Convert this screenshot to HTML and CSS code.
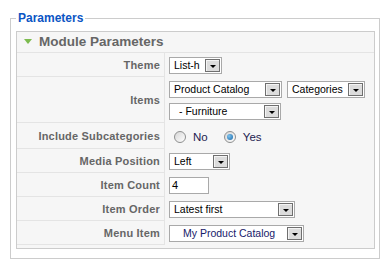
FILE: index.html
```html
<!DOCTYPE html>
<html>
  <head>
    <title>Module Parameters</title>
    <meta name="viewport" content="width=device-width, initial-scale=1.0" />
    <link rel="stylesheet" href="styles.css">
  </head>
  <body>
    <fieldset class="params">
      <legend>Parameters</legend>
      <div class="panel">
        <h3 class="panel-title"><span class="toggle"></span>Module Parameters</h3>
        <table class="paramlist">
          <tr class="row">
            <td class="key">Theme</td>
            <td class="value">
              <span class="select w-theme"><span class="opt">List-h</span><span class="arrow"></span></span>
            </td>
          </tr>
          <tr class="row row-items">
            <td class="key">Items</td>
            <td class="value">
              <div class="line">
                <span class="select w-catalog"><span class="opt">Product Catalog</span><span class="arrow"></span></span>
                <span class="select w-cats"><span class="opt">Categories</span><span class="arrow"></span></span>
              </div>
              <div class="line">
                <span class="select w-furniture"><span class="opt indent">- Furniture</span><span class="arrow"></span></span>
              </div>
            </td>
          </tr>
          <tr class="row row-radio">
            <td class="key">Include Subcategories</td>
            <td class="value">
              <label class="radio"><span class="dot"></span>No</label>
              <label class="radio"><span class="dot checked"></span>Yes</label>
            </td>
          </tr>
          <tr class="row">
            <td class="key">Media Position</td>
            <td class="value">
              <span class="select w-left"><span class="opt">Left</span><span class="arrow"></span></span>
            </td>
          </tr>
          <tr class="row">
            <td class="key">Item Count</td>
            <td class="value">
              <span class="textbox">4</span>
            </td>
          </tr>
          <tr class="row">
            <td class="key">Item Order</td>
            <td class="value">
              <span class="select w-order"><span class="opt">Latest first</span><span class="arrow"></span></span>
            </td>
          </tr>
          <tr class="row">
            <td class="key">Menu Item</td>
            <td class="value">
              <span class="select w-menu"><span class="opt menu-opt">My Product Catalog</span><span class="arrow"></span></span>
            </td>
          </tr>
        </table>
      </div>
    </fieldset>
  </body>
</html>
```

FILE: styles.css
```css
body {
  margin: 0;
  padding: 11px 0 0 10px;
  background-color: #ffffff;
  font-family: "Liberation Sans", Arial, sans-serif;
  font-size: 11px;
  color: #333333;
}

fieldset.params {
  width: 370px;
  box-sizing: border-box;
  margin: 0;
  padding: 6px 4px 9px 5px;
  border: 1px solid #cccccc;
}

fieldset.params legend {
  padding: 0 2px;
  font-size: 12px;
  line-height: 14px;
  font-weight: bold;
  color: #0b55c4;
}

.panel {
  border: 1px solid #cccccc;
  background-color: #f6f6f6;
  padding-bottom: 3px;
}

.panel-title {
  margin: 0;
  height: 20px;
  line-height: 20px;
  padding-left: 7px;
  font-size: 13.5px;
  font-weight: bold;
  color: #666666;
  border-bottom: 1px solid #e4e4e4;
}

.toggle {
  display: inline-block;
  width: 0;
  height: 0;
  border-left: 4.5px solid transparent;
  border-right: 4.5px solid transparent;
  border-top: 5px solid #7cbb4e;
  margin-right: 7px;
  vertical-align: 2px;
}

.paramlist {
  width: 100%;
  border-collapse: separate;
  border-spacing: 0;
}

.paramlist td {
  padding: 0;
  height: 23px;
}

.paramlist td.key {
  width: 143px;
  padding-right: 4px;
  text-align: right;
  font-weight: bold;
  color: #666666;
  border-right: 1px solid #e4e4e4;
  border-bottom: 1px solid #e4e4e4;
  letter-spacing: 0.2px;
}

.paramlist td.value {
  padding-left: 4px;
  vertical-align: middle;
}

.row-items td {
  height: 45px;
}

.row-radio td {
  height: 25px;
}

.line {
  display: flex;
  gap: 5px;
}

.line + .line {
  margin-top: 5px;
}

.select {
  display: inline-flex;
  align-items: center;
  justify-content: space-between;
  box-sizing: border-box;
  height: 17px;
  border: 1px solid #a9a9a9;
  background-color: #ffffff;
  vertical-align: middle;
  color: #000000;
  font-size: 10.5px;
}

.opt {
  padding-left: 4px;
  white-space: pre;
}

.opt.indent {
  padding-left: 9px;
}

.opt.menu-opt {
  padding-left: 13px;
  color: #17206a;
}

.arrow {
  display: flex;
  align-items: center;
  justify-content: center;
  box-sizing: border-box;
  width: 15px;
  height: 13px;
  margin-right: 1px;
  border: 1px solid #6f6f6f;
  background-color: #dcdcdc;
  box-shadow: inset 1px 1px 0 #f4f4f4;
}

.arrow::after {
  content: "";
  width: 0;
  height: 0;
  margin-top: 3px;
  border-left: 3.5px solid transparent;
  border-right: 3.5px solid transparent;
  border-top: 3.5px solid #000000;
}

.w-theme { width: 53px; }
.w-catalog { width: 113px; }
.w-cats { width: 78px; }
.w-furniture { width: 112px; }
.w-left { width: 61px; }
.w-order { width: 126px; }
.w-menu { width: 135px; }

.textbox {
  display: inline-block;
  box-sizing: border-box;
  width: 40px;
  height: 17px;
  line-height: 15px;
  padding-left: 2px;
  border: 1px solid #a9a9a9;
  background-color: #ffffff;
  color: #000000;
  vertical-align: middle;
}

.radio {
  display: inline-flex;
  align-items: center;
  margin-left: 5px;
  margin-right: 8px;
  font-size: 11.5px;
  color: #1c2250;
  vertical-align: middle;
}

.dot {
  display: inline-flex;
  align-items: center;
  justify-content: center;
  box-sizing: border-box;
  width: 12px;
  height: 12px;
  margin-right: 7px;
  border: 1px solid #8e8f8f;
  border-radius: 50%;
  background: linear-gradient(135deg, #d6d6d6, #ffffff);
}

.dot.checked::after {
  content: "";
  width: 6px;
  height: 6px;
  border-radius: 50%;
  background: radial-gradient(circle at 35% 35%, #7fc3ee, #1667a8);
}
```
